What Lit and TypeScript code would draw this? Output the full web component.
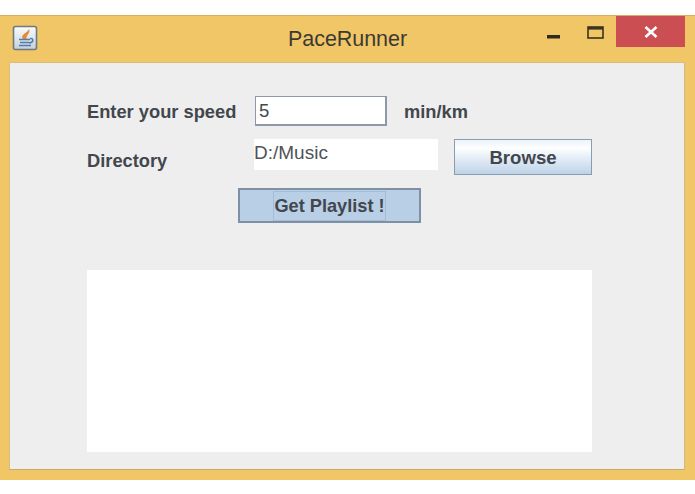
import { LitElement, html, css } from "lit";
import { customElement } from "lit/decorators.js";

@customElement("app-root")
export class AppRoot extends LitElement {
  static styles = css`
    :host { display: block; width: 695px; height: 494px; background: #fff; overflow: hidden; font-family: "Liberation Sans", Arial, sans-serif; }
    .window { margin-top: 15px; height: 465px; box-sizing: border-box; background: #f1c667; border-top: 1px solid #d5ae5c; display: flex; flex-direction: column; }
    .titlebar { height: 46px; flex: none; display: grid; grid-template-columns: 1fr auto 1fr; align-items: start; }
    .left { padding: 9px 0 0 12px; display: flex; }
    .title { font-size: 21.5px; color: #3c3a34; line-height: 26px; padding-top: 10px; letter-spacing: -0.05px; }
    .controls { display: flex; justify-content: flex-end; align-items: flex-start; padding-right: 10px; }
    .ctl { display: block; }
    .min { margin-right: 27px; margin-top: 19px; }
    .max { margin-right: 12px; margin-top: 10px; }
    .close { width: 69px; height: 31px; background: #cb4f52; display: flex; align-items: center; justify-content: center; }
    .content { flex: 1; margin: 0 10px 10px 9px; background: #eeeeee; border: 1px solid #d9bd7a; border-right-color: #cdb98a; border-bottom-color: #c9ab68; box-sizing: border-box; padding: 33px 92px 17px 77px; display: flex; flex-direction: column; }
    .lbl { font-size: 18.3px; font-weight: 700; color: #42464d; }
    .row1 { display: flex; align-items: center; height: 30px; }
    .row1 .lbl { padding-top: 2px; }
    .row1 .lbl:first-child { width: 168px; }
    .speed { width: 132px; height: 30px; box-sizing: border-box; background: #fff; border: 1px solid #8d99a8; border-width: 1px 2px 2px 1px; font-size: 18.5px; color: #45494e; padding-left: 3px; line-height: 28px; margin-right: 17px; }
    .row2 { display: flex; align-items: flex-start; height: 36px; margin-top: 13px; }
    .row2 .lbl { width: 167px; padding-top: 11px; }
    .dir { width: 184px; height: 31px; background: #fff; font-size: 19px; color: #4f5257; line-height: 28px; margin-right: 16px; }
    .browse { width: 138px; height: 36px; box-sizing: border-box; border: 1.5px solid #8a9cb0; background: linear-gradient(#eef4fb, #fdfeff 25%, #e3ecf6 55%, #bed3e8); font-size: 18.6px; font-weight: 700; color: #42464d; text-align: center; line-height: 35px; }
    .row3 { margin: 13px 0 0 151px; width: 183px; height: 35px; box-sizing: border-box; border: 2.5px solid #7d90a6; background: #b8cfe6; display: flex; align-items: center; justify-content: center; }
    .go { font-size: 18.2px; font-weight: 700; color: #42464d; line-height: 28px; outline: 1px solid #a5bcd6; }
    .output { margin-top: 47px; height: 182px; background: #fff; }
  `;
  render() {
    return html`
      <div class="window">
        <div class="titlebar">
          <div class="left">
            <svg width="26" height="26" viewBox="0 0 26 26">
              <defs><linearGradient id="g" x1="0" y1="0" x2="0" y2="1"><stop offset="0" stop-color="#fbfcfd"/><stop offset="1" stop-color="#c4d0db"/></linearGradient></defs>
              <rect x="1.5" y="1.5" width="23" height="23" rx="2" fill="url(#g)" stroke="#6f7a80" stroke-width="1.6"/>
              <path d="M17 4 C19 8 14 10 14.500 14 L11 14 C8.500 11 12 9 14 7.500 C15 6.500 16.500 5.500 17 4Z" fill="#e58a35"/>
              <path d="M7 14.500h11M8 17.500h9M7 20.500h12" stroke="#4f7ea8" stroke-width="1.7" fill="none"/>
              <path d="M18 13.500c4-.5 4 4-1 4.500" stroke="#4f7ea8" stroke-width="1.5" fill="none"/>
            </svg>
          </div>
          <div class="title">PaceRunner</div>
          <div class="controls">
            <svg class="ctl min" width="13" height="4" viewBox="0 0 13 4"><rect width="13" height="3.5" fill="#2e2a1e"/></svg>
            <svg class="ctl max" width="17" height="13" viewBox="0 0 17 13"><rect x="1" y="1" width="15" height="11" fill="none" stroke="#3a3420" stroke-width="1.6"/><rect x="1" y="1" width="15" height="2.600" fill="#3a3420"/></svg>
            <div class="close"><svg width="14" height="12" viewBox="0 0 14 12"><path d="M1.500 1 L12.500 11 M12.500 1 L1.500 11" stroke="#fff" stroke-width="2.600"/></svg></div>
          </div>
        </div>
        <div class="content">
          <div class="row1"><span class="lbl">Enter your speed</span><div class="speed">5</div><span class="lbl">min/km</span></div>
          <div class="row2"><span class="lbl">Directory</span><div class="dir">D:/Music</div><div class="browse">Browse</div></div>
          <div class="row3"><span class="go">Get Playlist !</span></div>
          <div class="output"></div>
        </div>
      </div>
    `;
  }
}
